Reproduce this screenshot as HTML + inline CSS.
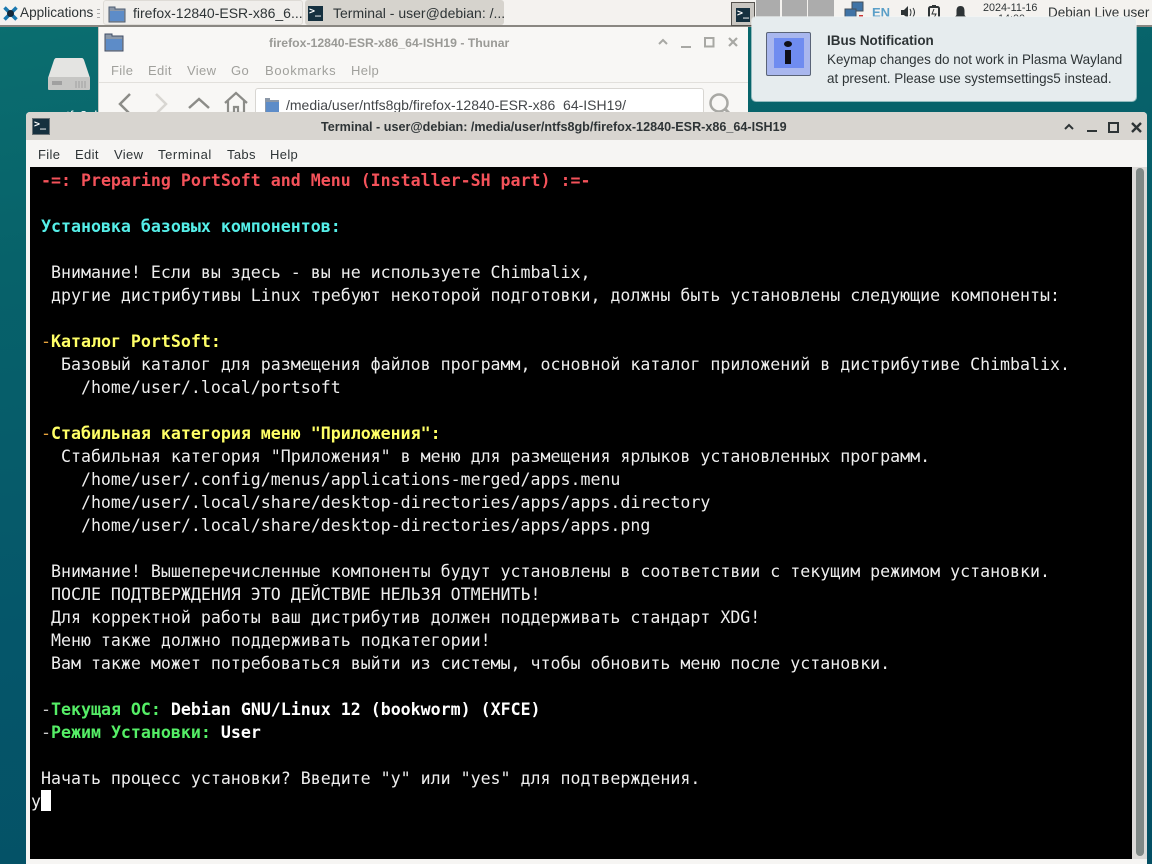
<!DOCTYPE html>
<html><head><meta charset="utf-8">
<style>
html,body{margin:0;padding:0;width:1152px;height:864px;overflow:hidden;background:#05566a}
*{box-sizing:border-box}
.a{position:absolute}
.t{position:absolute;white-space:pre;font-family:"Liberation Sans","Noto Sans CJK SC",sans-serif;font-size:13px;line-height:18px}
.m{letter-spacing:.35px}
#term{position:absolute;left:30px;top:167px;width:1102px;height:692px;background:#000;overflow:hidden}
.l{position:absolute;left:1px;white-space:pre;font-family:"DejaVu Sans Mono",monospace;font-size:16.6px;line-height:23px;height:23px;color:#eee}
.r{color:#f4525a;font-weight:bold}.c{color:#55eee8;font-weight:bold}.y{color:#ffff66;font-weight:bold}.g{color:#55ee66;font-weight:bold}.w{color:#fff;font-weight:bold}.o{color:#e8a33c}
</style></head><body>
<div class="a" style="left:0;top:0;width:1152px;height:864px;background:linear-gradient(170deg,#0b6f70 0%,#07626a 25%,#05566a 60%,#044f64 100%)"></div>

<!-- panel -->
<div class="a" style="left:0;top:0;width:1152px;height:27px;background:#f4f2ef;border-bottom:2px solid #8a8782"></div>
<svg class="a" style="left:3px;top:6px" width="15" height="15" viewBox="0 0 15 15"><path d="M1.500 1.500L13.500 13.500M13.500 1.500L1.500 13.500" stroke="#1a78b0" stroke-width="3.500"/><circle cx="7.500" cy="7.500" r="3.500" fill="#14283a"/></svg>
<div class="t" style="left:20px;top:4px;font-size:13.600px;color:#2e3436">Applications</div>
<div class="a" style="left:97px;top:9px;width:3px;height:9px;border-top:1px solid #aaa;border-bottom:1px solid #aaa"></div>
<div class="a" style="left:97px;top:13px;width:3px;height:1px;background:#aaa"></div>
<div class="a" style="left:103px;top:0;width:200px;height:25px;background:#f0eeeb;border:1px solid #dedbd6;border-radius:3px"></div>
<div class="a" style="left:305px;top:0;width:199px;height:25px;background:#d6d3cd;border-radius:3px"></div>
<svg class="a" style="left:108px;top:6px" width="18" height="17" viewBox="0 0 18 17"><path d="M1 1h6v2h10v13H1z" fill="#8c98a8" stroke="#4d5c72"/><rect x="2" y="5" width="14" height="10" fill="#5d8cc8"/></svg>
<div class="t" style="left:133px;top:4px;font-size:14px;color:#2e3436">firefox-12840-ESR-x86_6...</div>
<div class="a" style="left:308px;top:6px;width:15px;height:15px;background:#15303f"></div>
<div class="t" style="left:309px;top:6px;font:bold 10px/12px 'DejaVu Sans Mono',monospace;color:#fff">&gt;_</div>
<div class="t" style="left:333px;top:4px;font-size:14px;color:#2e3436">Terminal - user@debian: /...</div>

<!-- pager/tray -->
<div class="a" style="left:731px;top:2px;width:24px;height:24px;background:#c9c6c1;border:1px solid #55524e"></div>
<div class="a" style="left:736px;top:8px;width:14px;height:14px;background:#15303f"></div>
<div class="t" style="left:737px;top:8px;font:bold 10px/12px 'DejaVu Sans Mono',monospace;color:#fff">&gt;_</div>
<div class="a" style="left:756px;top:0;width:24px;height:18px;background:#acacac"></div>
<div class="a" style="left:782px;top:0;width:25px;height:18px;background:#acacac"></div>
<div class="a" style="left:808px;top:0;width:26px;height:18px;background:#acacac"></div>
<svg class="a" style="left:844px;top:1px" width="24" height="20" viewBox="0 0 24 20"><rect x="8" y="1" width="11" height="9" fill="#3f73a6" stroke="#44505c"/><rect x="1" y="8" width="11" height="9" fill="#3f73a6" stroke="#44505c"/><rect x="15" y="14" width="4" height="4" fill="#c33"/></svg>
<div class="t" style="left:872px;top:4px;font-weight:bold;font-size:13px;color:#5a9fc8">EN</div>
<svg class="a" style="left:899px;top:5px" width="20" height="16" viewBox="0 0 20 16"><path d="M2 5h3l4-4v13l-4-4H2z" fill="#2e3436"/><path d="M11 4q2 3 0 7M14 3q3 4 0 9" stroke="#2e3436" fill="none"/></svg>
<svg class="a" style="left:926px;top:4px" width="16" height="18" viewBox="0 0 16 18"><rect x="3" y="3" width="10" height="13" rx="1.500" fill="none" stroke="#2e3436" stroke-width="2"/><rect x="6" y="1" width="4" height="2" fill="#2e3436"/><path d="M8 5l-2 5h4l-2 4" stroke="#2e3436" fill="none"/></svg>
<svg class="a" style="left:953px;top:5px" width="15" height="15" viewBox="0 0 15 15"><path d="M7.500 1c-3 0-4 2-4 5v4L2 12h11l-1.500-2V6c0-3-1-5-4-5z" fill="#2e3436"/></svg>
<div class="t" style="left:983px;top:1px;font-size:10.800px;line-height:14px;color:#2e3436">2024-11-16</div>
<div class="t" style="left:998px;top:12px;font-size:10.800px;line-height:14px;color:#2e3436">14:00</div>
<div class="t" style="left:1048px;top:4px;font-size:13.500px;color:#2e3436">Debian Live user</div>

<!-- desktop icon -->
<svg class="a" style="left:48px;top:58px" width="42" height="33" viewBox="0 0 42 33"><path d="M8 0h26q1 0 2 2l6 18H0L6 2q1-2 2-2z" fill="#e4e4e2"/><rect x="0" y="19" width="42" height="13" rx="1" fill="#c6c6c4"/><rect x="4" y="23" width="10" height="4" fill="#a0a0a0"/><path d="M28 23v7M31 23v7M34 23v7M37 23v7" stroke="#a0a0a0"/></svg>
<div class="t" style="left:59px;top:107px;font-size:13px;color:#fff">ntfs8gb</div>

<!-- thunar -->
<div class="a" style="left:98px;top:27px;width:650px;height:90px;background:#f8f7f5;border-left:1px solid #c8c6c2"></div>
<svg class="a" style="left:104px;top:32px" width="20" height="20" viewBox="0 0 20 20"><path d="M1 2h7v2h11v15H1z" fill="#8c98a8" stroke="#3f4e66"/><rect x="2" y="7" width="16" height="11" fill="#5d8cc8"/></svg>
<div class="t" style="left:269px;top:34px;font-size:12.250px;font-weight:bold;color:#9a9a96">firefox-12840-ESR-x86_64-ISH19 - Thunar</div>
<svg class="a" style="left:656px;top:35px" width="86" height="14" viewBox="0 0 86 14"><path d="M3 9L7 5L11 9" fill="none" stroke="#a8a8a4" stroke-width="2"/><path d="M25 12h10" stroke="#a8a8a4" stroke-width="2"/><rect x="49" y="3" width="8.500" height="8.500" fill="none" stroke="#a8a8a4" stroke-width="2"/><path d="M73 3L81 11M81 3L73 11" stroke="#a8a8a4" stroke-width="2.200"/></svg>
<div class="t m" style="left:111px;top:62px;color:#a0a09c">File</div>
<div class="t m" style="left:148px;top:62px;color:#a0a09c">Edit</div>
<div class="t m" style="left:187px;top:62px;color:#a0a09c">View</div>
<div class="t m" style="left:231px;top:62px;color:#a0a09c">Go</div>
<div class="t m" style="left:265px;top:62px;color:#a0a09c;letter-spacing:.7px">Bookmarks</div>
<div class="t m" style="left:351px;top:62px;color:#a0a09c">Help</div>
<div class="a" style="left:99px;top:82px;width:649px;height:1px;background:#e2e0dc"></div>
<svg class="a" style="left:112px;top:88px" width="140" height="26" viewBox="0 0 140 26"><path d="M18 6L8 16L18 26" fill="none" stroke="#8c8c88" stroke-width="2.500"/><path d="M44 6L54 16L44 26" fill="none" stroke="#d8d6d2" stroke-width="2.500"/><path d="M77 20L87 11L97 20" fill="none" stroke="#8c8c88" stroke-width="2.500"/><path d="M113 15L124 5L135 15M116 13v12h16V13M122 25v-6h4v6" fill="none" stroke="#8c8c88" stroke-width="2.200"/></svg>
<div class="a" style="left:255px;top:88px;width:449px;height:30px;background:#fff;border:1px solid #d8d6d2;border-radius:3px"></div>
<svg class="a" style="left:264px;top:97px" width="16" height="15" viewBox="0 0 16 15"><path d="M1 1h5v2h9v12H1z" fill="#8c98a8"/><rect x="2" y="5" width="13" height="10" fill="#5d8cc8"/></svg>
<div class="t" style="left:286px;top:96px;font-size:14px;color:#44474a">/media/user/ntfs8gb/firefox-12840-ESR-x86_64-ISH19/</div>
<svg class="a" style="left:707px;top:92px" width="26" height="22" viewBox="0 0 26 22"><circle cx="12" cy="11" r="8.500" fill="none" stroke="#a8a8a4" stroke-width="2.500"/><path d="M18 17L24 23" stroke="#a8a8a4" stroke-width="3"/></svg>

<!-- notification -->
<div class="a" style="left:752px;top:17px;width:384px;height:84px;background:#e6ecee;border-radius:4px;box-shadow:0 0 0 1px rgba(240,245,245,.6)"></div>
<div class="a" style="left:766px;top:32px;width:45px;height:44px;background:#a9b7ee;border:1px solid #5a6478;border-radius:2px"></div>
<div class="a" style="left:774px;top:38px;width:30px;height:30px;background:#6f8cf0"></div>
<div class="a" style="left:784px;top:41px;width:8px;height:6px;background:#101018;border-radius:50%"></div>
<div class="a" style="left:785px;top:50px;width:6px;height:14px;background:#101018"></div>
<div class="t" style="left:827px;top:32px;font-size:13.450px;font-weight:bold;color:#2e3436">IBus Notification</div>
<div class="t" style="left:827px;top:51px;font-size:13.450px;color:#2e3436">Keymap changes do not work in Plasma Wayland</div>
<div class="t" style="left:827px;top:70px;font-size:13.450px;color:#2e3436">at present. Please use systemsettings5 instead.</div>

<!-- terminal window -->
<div class="a" style="left:26px;top:112px;width:1121px;height:752px;background:#f6f5f3;border-radius:4px 4px 0 0"></div>
<div class="a" style="left:26px;top:112px;width:1121px;height:28px;background:#d8d5d0;border-radius:4px 4px 0 0"></div>
<div class="a" style="left:32px;top:118px;width:18px;height:17px;background:#15303f;border:1px solid #6a7276"></div>
<div class="t" style="left:34px;top:119px;font:bold 10px/12px 'DejaVu Sans Mono',monospace;color:#fff">&gt;_</div>
<div class="t" style="left:321px;top:118px;font-size:12.600px;font-weight:bold;color:#2e3436">Terminal - user@debian: /media/user/ntfs8gb/firefox-12840-ESR-x86_64-ISH19</div>
<svg class="a" style="left:1063px;top:120px" width="80" height="14" viewBox="0 0 80 14"><path d="M2 9L6 5L10 9" fill="none" stroke="#2e3436" stroke-width="2"/><path d="M24 11h10" stroke="#2e3436" stroke-width="2"/><rect x="46" y="3" width="9" height="9" fill="none" stroke="#2e3436" stroke-width="2"/><path d="M69 3L78 12M78 3L69 12" stroke="#2e3436" stroke-width="2.400"/></svg>
<div class="t m" style="left:38px;top:146px;color:#2e3436">File</div>
<div class="t m" style="left:75px;top:146px;color:#2e3436">Edit</div>
<div class="t m" style="left:114px;top:146px;color:#2e3436">View</div>
<div class="t m" style="left:158px;top:146px;color:#2e3436;letter-spacing:.6px">Terminal</div>
<div class="t m" style="left:227px;top:146px;color:#2e3436">Tabs</div>
<div class="t m" style="left:270px;top:146px;color:#2e3436">Help</div>
<div class="a" style="left:1132px;top:167px;width:15px;height:692px;background:#dcdad8"></div>
<div class="a" style="left:1136px;top:168px;width:8px;height:688px;background:#7f8886;border-radius:4px"></div>

<div id="term">
<div class="l" style="top:2px"> <span class="r">-=: Preparing PortSoft and Menu (Installer-SH part) :=-</span></div>
<div class="l" style="top:48px"> <span class="c">Установка базовых компонентов:</span></div>
<div class="l" style="top:94px">  Внимание! Если вы здесь - вы не используете Chimbalix,</div>
<div class="l" style="top:117px">  другие дистрибутивы Linux требуют некоторой подготовки, должны быть установлены следующие компоненты:</div>
<div class="l" style="top:163px"> <span class="o">-</span><span class="y">Каталог PortSoft:</span></div>
<div class="l" style="top:186px">   Базовый каталог для размещения файлов программ, основной каталог приложений в дистрибутиве Chimbalix.</div>
<div class="l" style="top:209px">     /home/user/.local/portsoft</div>
<div class="l" style="top:255px"> <span class="o">-</span><span class="y">Стабильная категория меню "Приложения":</span></div>
<div class="l" style="top:278px">   Стабильная категория "Приложения" в меню для размещения ярлыков установленных программ.</div>
<div class="l" style="top:301px">     /home/user/.config/menus/applications-merged/apps.menu</div>
<div class="l" style="top:324px">     /home/user/.local/share/desktop-directories/apps/apps.directory</div>
<div class="l" style="top:347px">     /home/user/.local/share/desktop-directories/apps/apps.png</div>
<div class="l" style="top:393px">  Внимание! Вышеперечисленные компоненты будут установлены в соответствии с текущим режимом установки.</div>
<div class="l" style="top:416px">  ПОСЛЕ ПОДТВЕРЖДЕНИЯ ЭТО ДЕЙСТВИЕ НЕЛЬЗЯ ОТМЕНИТЬ!</div>
<div class="l" style="top:439px">  Для корректной работы ваш дистрибутив должен поддерживать стандарт XDG!</div>
<div class="l" style="top:462px">  Меню также должно поддерживать подкатегории!</div>
<div class="l" style="top:485px">  Вам также может потребоваться выйти из системы, чтобы обновить меню после установки.</div>
<div class="l" style="top:531px"> <span style="color:#ccc">-</span><span class="g">Текущая ОС:</span> <span class="w">Debian GNU/Linux 12 (bookworm) (XFCE)</span></div>
<div class="l" style="top:554px"> <span style="color:#ccc">-</span><span class="g">Режим Установки:</span> <span class="w">User</span></div>
<div class="l" style="top:600px"> Начать процесс установки? Введите "y" или "yes" для подтверждения.</div>
<div class="l" style="top:623px">y</div>
<div class="a" style="left:11px;top:623px;width:10px;height:21px;background:#fff"></div>
</div>
</body></html>
